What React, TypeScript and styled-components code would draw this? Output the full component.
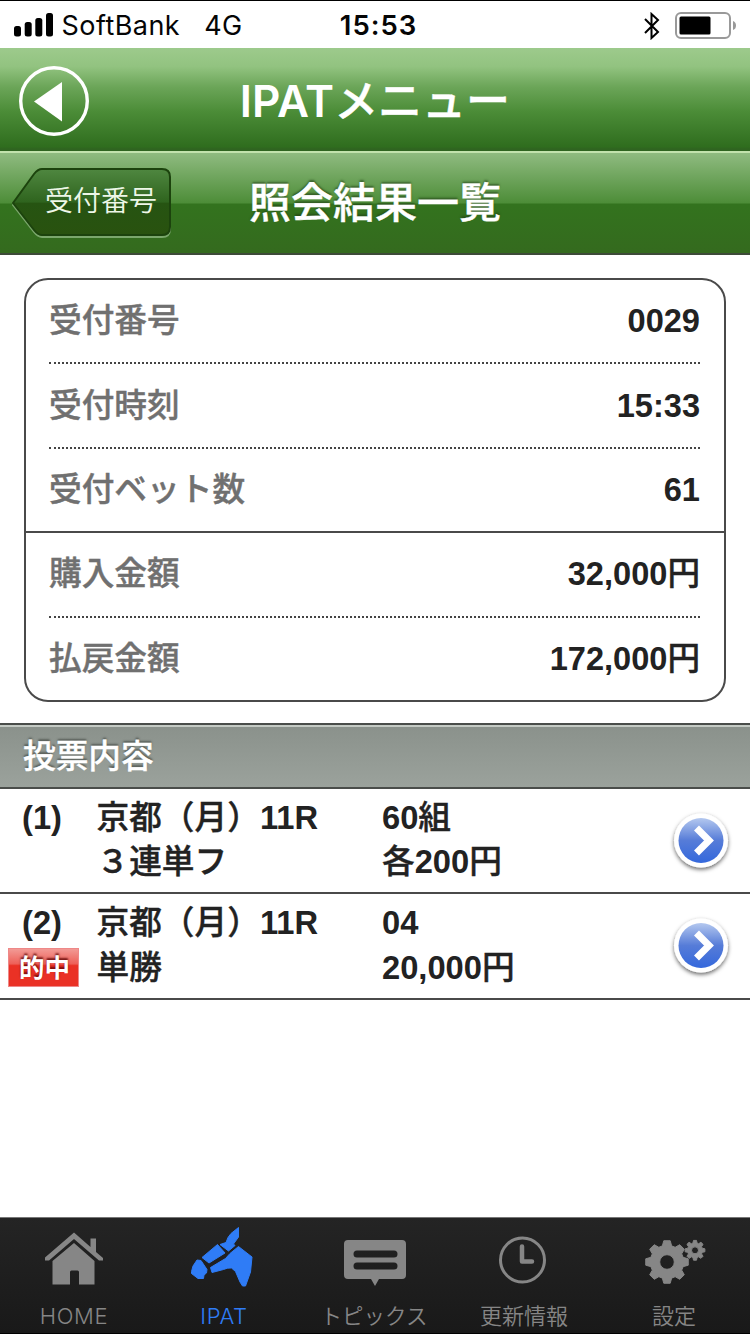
import React from 'react';
import styled, { createGlobalStyle } from 'styled-components';

const Global = createGlobalStyle`
  * { box-sizing: border-box; }
  body { margin: 0; background: #fff; }
`;

const body = `"Liberation Sans", "Noto Sans CJK JP", sans-serif`;
const system = `Inter, "Noto Sans CJK JP", sans-serif`;

const Screen = styled.div`
  width: 750px;
  height: 1334px;
  display: flex;
  flex-direction: column;
  overflow: hidden;
  background: #fff;
  color: #222;
  font-family: ${body};
`;

const Kanji = styled.span`
  font-weight: 500;
  -webkit-text-stroke: 0.4px currentColor;
`;

const StatusBar = styled.header`
  height: 48px;
  flex: none;
  display: grid;
  grid-template-columns: 1fr auto 1fr;
  align-items: center;
  padding: 2px 13px 0 14px;
  border-top: 1px solid #000;
  font: 400 27px/1 ${system};
  color: #050505;
`;
const Carrier = styled.div`
  display: flex;
  align-items: center;
  letter-spacing: 0.45px;
`;
const SignalBars = styled.svg`
  margin-bottom: 2px;
`;
const CarrierName = styled.span`
  margin-left: 8.500px;
`;
const Network = styled.span`
  margin-left: 24px;
`;
const Clock = styled.div`
  margin-left: 6px;
  font-size: 27.500px;
  font-weight: 600;
  letter-spacing: 1px;
`;
const StatusIcons = styled.div`
  display: flex;
  justify-content: flex-end;
  align-items: center;
  gap: 14px;
`;

const MenuBar = styled.div`
  height: 103px;
  flex: none;
  display: grid;
  grid-template-columns: 108px 1fr 108px;
  align-items: center;
  padding: 2px 19px 0;
  background: linear-gradient(#9dca8c 0%, #92c380 18%, #6ba558 38%, #4b8c37 62%, #2f6d1e 96%, #2f6420 98%);
`;
const MenuTitle = styled.h1`
  margin: 0;
  text-align: center;
  color: #fff;
  font: 600 44px/60px ${system};
  white-space: nowrap;
`;

const PageBar = styled.div`
  height: 104px;
  flex: none;
  display: flex;
  align-items: flex-start;
  padding: 15px 12px 0;
  border-top: 2px solid #c2e2ad;
  border-bottom: 2px solid #3d4a38;
  background: linear-gradient(#8fbb80 0%, #4d8d38 50%, #33731e 51%, #346a1e 100%);
`;
const BackButton = styled.button`
  position: relative;
  width: 160px;
  height: 70px;
  padding: 0 0 9px 33px;
  border: 0;
  background: none;
  color: #eef7e8;
  text-align: left;
  font: 400 28px/60px "Noto Sans CJK JP", sans-serif;
`;
const BackShape = styled.svg`
  position: absolute;
  inset: 0;
`;
const BackLabel = styled.span`
  position: relative;
  font-weight: 350;
`;
const PageTitle = styled.h2`
  margin: 0 0 0 77px;
  color: #fff;
  font: 700 42px/64px "Noto Sans CJK JP", sans-serif;
  text-shadow: 0 -2px 2px rgba(30, 60, 20, 0.6);
`;

const Summary = styled.dl`
  margin: 23px 24px 21px;
  flex: none;
  border: 2px solid #4a4a4a;
  border-radius: 24px;
`;
const Group = styled.div`
  padding: 0 24px 0 23px;
  & + & { border-top: 2px solid #4a4a4a; }
`;
const SummaryRow = styled.div`
  height: 82.4px;
  display: flex;
  justify-content: space-between;
  align-items: center;
  box-sizing: content-box;
  & + & { border-top: 2px dotted #444; }
`;
const Label = styled.dt`
  color: #707070;
  font-size: 32.7px;
  font-weight: 700;
  line-height: 48px;
`;
const Value = styled.dd`
  margin: 0;
  font-size: 32.6px;
  font-weight: 700;
  line-height: 48px;
`;

const SectionBar = styled.h3`
  margin: 0;
  height: 66px;
  flex: none;
  padding: 2px 23px 0;
  border-top: 2px solid #4a4d4a;
  border-bottom: 2px solid #4a4d4a;
  box-shadow: inset 0 2px 0 #c4cac4;
  background: linear-gradient(#8a918b, #9ba29c);
  color: #fff;
  font: 700 32.7px/60px ${body};
  text-shadow: 0 -2px 2px rgba(50, 55, 50, 0.6);
`;

const BetRow = styled.div`
  height: 105.5px;
  flex: none;
  display: grid;
  grid-template-columns: 96.500px 285.500px 1fr 84px;
  padding-top: 7px;
  border-bottom: 2px solid #4a4a4a;
  font-size: 32.7px;
  font-weight: 700;
  line-height: 44.500px;
  white-space: nowrap;
`;
const BetNumber = styled.div`
  padding-left: 22px;
`;
const HitBadge = styled.div`
  width: 71px;
  height: 39px;
  margin: 2px 0 0 -14px;
  padding-left: 10px;
  border: 1px solid #e88;
  background: linear-gradient(#f29a95 0%, #ee6058 40%, #ea3125 45%, #ea3125 100%);
  color: #fff;
  font-size: 25.500px;
  line-height: 38px;
  text-shadow: 0 -2px 2px rgba(90, 0, 0, 0.8);
`;
const ArrowButton = styled.button`
  width: 68px;
  height: 72px;
  margin-top: 8px;
  padding: 0;
  border: 0;
  background: none;
`;

const TabBar = styled.nav`
  height: 117px;
  flex: none;
  margin-top: auto;
  display: grid;
  grid-template-columns: repeat(5, 150px);
  border-top: 1px solid #777;
  border-bottom: 1px solid #000;
  background: linear-gradient(#242424, #191919);
`;
const Tab = styled.a<{ $active?: boolean }>`
  display: flex;
  flex-direction: column;
  align-items: center;
  padding-top: 5px;
  padding-right: 2px;
  color: ${(p) => (p.$active ? '#2f7cf6' : '#868686')};
  font: 350 22px/32px ${system};
`;
const TabLabel = styled.span<{ $size?: number; $spacing?: number }>`
  margin-top: 7px;
  font-size: ${(p) => p.$size ?? 22}px;
  letter-spacing: ${(p) => p.$spacing ?? 0}px;
`;

const Arrow = ({ id }: { id: string }) => (
  <svg width="68" height="72" viewBox="0 0 68 72">
    <defs>
      <linearGradient id={id} x1="0" y1="0" x2="0" y2="1">
        <stop offset="0" stopColor="#b4c8ef" />
        <stop offset="0.5" stopColor="#567cd8" />
        <stop offset="1" stopColor="#3468dc" />
      </linearGradient>
      <filter id={id + 'shadow'} x="-20%" y="-20%" width="140%" height="140%">
        <feDropShadow dx="0" dy="2" stdDeviation="2" floodColor="#000" floodOpacity="0.6" />
      </filter>
    </defs>
    <circle cx="35" cy="36.500" r="27" fill="#fff" filter={`url(#${id}shadow)`} />
    <circle cx="35" cy="36.500" r="22.5" fill={`url(#${id})`} />
    <path d="M30.500 24l12.500 12.500L30.500 49" fill="none" stroke="#fff" strokeWidth="7" />
  </svg>
);

const gear = (cx: number, cy: number, inner: number, outer: number) => {
  const pts: string[] = [];
  for (let i = 0; i < 8; i++) {
    const a = (i * Math.PI) / 4 - Math.PI / 2;
    for (const [r, d] of [[inner, -0.28], [outer, -0.15], [outer, 0.15], [inner, 0.28]]) {
      pts.push(`${(cx + r * Math.cos(a + d)).toFixed(2)} ${(cy + r * Math.sin(a + d)).toFixed(2)}`);
    }
  }
  return `M${pts.join('L')}Z`;
};
const hole = (cx: number, cy: number, r: number) =>
  `M${cx - r} ${cy}a${r} ${r} 0 1 0 ${2 * r} 0a${r} ${r} 0 1 0 ${-2 * r} 0Z`;

const Icon = styled.svg.attrs({ width: 80, height: 70, viewBox: '0 0 80 70' })<{ $outline?: number }>`
  fill: currentColor;
  stroke: currentColor;
  stroke-width: ${(p) => p.$outline ?? 0};
  stroke-linejoin: round;
`;

const HomeIcon = () => (
  <Icon>
    <path d="M11 34.500L40 9.500l16.500 14.500V15.500h5.500v13.500L69 35v2.500H65L40 16 15 37.500H11Z" />
    <path d="M40 20L60.500 38v23.500H45V49q0-1.500-1.500-1.500h-6q-1.500 0-1.500 1.500v12.500H18.500V38Z" />
  </Icon>
);
const HorseIcon = () => (
  <Icon $outline={1}>
    <path d="M7.500 48.500L9 43l4-6 4 .5 6 9-.500 3.500-2.500 2-.5 3.500h-5.500L7.500 50.500Z" />
    <path d="M18 34.500L33.500 21.500 41 30 25 40Z" />
    <path d="M36 21.500l6-2 2-5 3-4 7.500-6V14L49.500 21l1.500 1.500-6.500 5.500Z" />
    <path d="M26.500 44.500L41.500 35.500 46 30.500 54.500 23.500 68 34l-1.500 15-5 14-3 0-2.500-4-4.500-10.500-4-3.500q-4-.5-8 1.500L28 49.500Z" />
  </Icon>
);
const TopicsIcon = () => (
  <Icon>
    <path fillRule="evenodd" d="M14 17h54q4 0 4 4v31q0 4-4 4H45l-4 7-4-7H14q-4 0-4-4V21q0-4 4-4ZM23 27.500a3.500 3.500 0 0 0 0 7h37a3.500 3.500 0 0 0 0-7ZM23 39.500a3.500 3.500 0 0 0 0 7h37a3.500 3.500 0 0 0 0-7Z" />
  </Icon>
);
const ClockIcon = () => (
  <Icon>
    <circle cx="38.500" cy="37" r="22" fill="none" strokeWidth="3" />
    <path d="M38 23.500v15H48" fill="none" strokeWidth="4.500" strokeLinecap="round" />
  </Icon>
);
const GearsIcon = () => (
  <Icon $outline={1}>
    <path fillRule="evenodd" d={gear(33, 39, 16.8, 21.5) + hole(33, 39, 7.3)} />
    <path fillRule="evenodd" d={gear(61, 27.3, 7.5, 10) + hole(61, 27.3, 3.5)} />
  </Icon>
);

/* Japanese runs are set a little lighter than the bold Latin digits beside them. */
const Mixed = ({ text }: { text: string }) => (
  <>
    {text.split(/([\u3000-\uffef]+)/).filter(Boolean).map((part, i) =>
      part.charCodeAt(0) >= 0x3000 ? <Kanji key={i}>{part}</Kanji> : part
    )}
  </>
);

const groups = [
  [['受付番号', '0029'], ['受付時刻', '15:33'], ['受付ベット数', '61']],
  [['購入金額', '32,000円'], ['払戻金額', '172,000円']],
];

const bets = [
  { no: '(1)', race: '京都（月）11R', type: '３連単フ', pick: '60組', stake: '各200円', hit: false },
  { no: '(2)', race: '京都（月）11R', type: '単勝', pick: '04', stake: '20,000円', hit: true },
];

export default function App() {
  return (
    <Screen>
      <Global />
      <StatusBar>
        <Carrier>
          <SignalBars width="39" height="24" viewBox="0 0 39 24">
            <rect x="0" y="13" width="7" height="10.500" rx="2.500" />
            <rect x="10.700" y="9" width="7" height="14.500" rx="2.500" />
            <rect x="21.300" y="5" width="7" height="18.500" rx="2.500" />
            <rect x="32" y="0" width="7" height="23.500" rx="2.500" />
          </SignalBars>
          <CarrierName>SoftBank</CarrierName>
          <Network>4G</Network>
        </Carrier>
        <Clock>15:53</Clock>
        <StatusIcons>
          <svg width="18" height="28" viewBox="0 0 18 28">
            <path d="M2 7l13 13-6.500 6V2L15 8 2 21" fill="none" stroke="#000" strokeWidth="2" />
          </svg>
          <svg width="62" height="28" viewBox="0 0 62 28">
            <rect x="1" y="1" width="54" height="25" rx="5" fill="none" stroke="#999" strokeWidth="2" />
            <rect x="4.500" y="4.500" width="31" height="18" rx="1.500" />
            <path d="M58 9q3 1 3 4.500T58 18Z" fill="#999" />
          </svg>
        </StatusIcons>
      </StatusBar>

      <MenuBar>
        <svg width="70" height="70" viewBox="0 0 70 70">
          <circle cx="35" cy="35" r="33.300" fill="none" stroke="#fff" strokeWidth="3.400" />
          <path d="M15 35.500L43 16v39.500Z" fill="#fff" />
        </svg>
        <MenuTitle><Mixed text="IPATメニュー" /></MenuTitle>
      </MenuBar>

      <PageBar>
        <BackButton>
          <BackShape width="160" height="70" viewBox="0 0 160 70">
            <defs>
              <linearGradient id="back" x1="0" y1="0" x2="0" y2="1">
                <stop offset="0" stopColor="#4f8740" />
                <stop offset="0.500" stopColor="#2f641e" />
                <stop offset="0.520" stopColor="#265412" />
                <stop offset="1" stopColor="#29520f" />
              </linearGradient>
            </defs>
            <path d="M1 36L22 7q4-5 8-5h120q8 0 8 8v50q0 8-8 8H30q-4 0-8-5Z" fill="none" stroke="#7ba76c" strokeWidth="2" transform="translate(0 1)" />
            <path d="M1 35L22 6q4-5 8-5h120q8 0 8 8v50q0 8-8 8H30q-4 0-8-5Z" fill="url(#back)" stroke="#1c430d" strokeWidth="2" />
          </BackShape>
          <BackLabel>受付番号</BackLabel>
        </BackButton>
        <PageTitle><Mixed text="照会結果一覧" /></PageTitle>
      </PageBar>

      <Summary>
        {groups.map((rows, i) => (
          <Group key={i}>
            {rows.map(([label, value]) => (
              <SummaryRow key={label}>
                <Label><Mixed text={label} /></Label>
                <Value><Mixed text={value} /></Value>
              </SummaryRow>
            ))}
          </Group>
        ))}
      </Summary>

      <SectionBar><Mixed text="投票内容" /></SectionBar>
      {bets.map((bet, i) => (
        <BetRow key={bet.no}>
          <BetNumber>
            <div>{bet.no}</div>
            {bet.hit && <HitBadge>的中</HitBadge>}
          </BetNumber>
          <div>
            <div><Mixed text={bet.race} /></div>
            <div><Mixed text={bet.type} /></div>
          </div>
          <div>
            <div><Mixed text={bet.pick} /></div>
            <div><Mixed text={bet.stake} /></div>
          </div>
          <ArrowButton>
            <Arrow id={`arrow${i}`} />
          </ArrowButton>
        </BetRow>
      ))}

      <TabBar>
        <Tab><HomeIcon /><TabLabel $spacing={0.6}>HOME</TabLabel></Tab>
        <Tab $active><HorseIcon /><TabLabel $spacing={0.6}>IPAT</TabLabel></Tab>
        <Tab><TopicsIcon /><TabLabel $size={21.500}>トピックス</TabLabel></Tab>
        <Tab><ClockIcon /><TabLabel>更新情報</TabLabel></Tab>
        <Tab><GearsIcon /><TabLabel>設定</TabLabel></Tab>
      </TabBar>
    </Screen>
  );
}
